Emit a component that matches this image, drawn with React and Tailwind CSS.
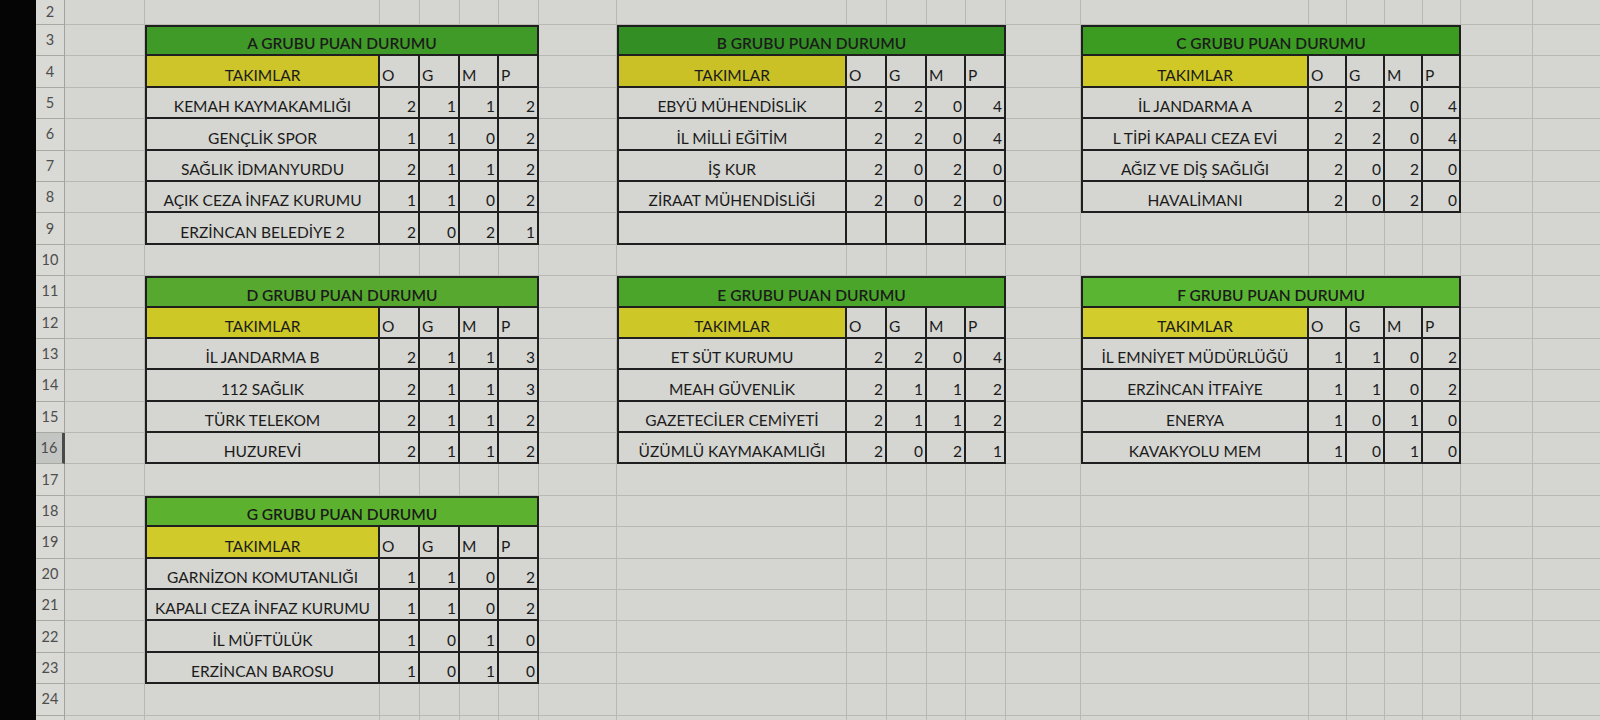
import React from 'react';

// sheet columns: black edge, row header, A, [B-F], G, [H-L], M, [N-R], S, T
const COLS =
  'grid-cols-[36px_29px_80px_235px_40px_40px_39px_40px_78px_230px_40px_40px_39px_40px_75px_228px_38px_38px_38px_38px_72px_72px]';

const tables = {
  A: {
    title: 'A GRUBU PUAN DURUMU',
    green: 'bg-[#3f9a28]',
    yellow: 'bg-[#cdc52a]',
    teams: [
      ['KEMAH KAYMAKAMLIĞI', 2, 1, 1, 2],
      ['GENÇLİK SPOR', 1, 1, 0, 2],
      ['SAĞLIK İDMANYURDU', 2, 1, 1, 2],
      ['AÇIK CEZA İNFAZ KURUMU', 1, 1, 0, 2],
      ['ERZİNCAN BELEDİYE 2', 2, 0, 2, 1],
    ],
  },
  B: {
    title: 'B GRUBU PUAN DURUMU',
    green: 'bg-[#338f24]',
    yellow: 'bg-[#c9c126]',
    teams: [
      ['EBYÜ MÜHENDİSLİK', 2, 2, 0, 4],
      ['İL MİLLİ EĞİTİM', 2, 2, 0, 4],
      ['İŞ KUR', 2, 0, 2, 0],
      ['ZİRAAT MÜHENDİSLİĞİ', 2, 0, 2, 0],
      ['', '', '', '', ''],
    ],
  },
  C: {
    title: 'C GRUBU PUAN DURUMU',
    green: 'bg-[#3c9c22]',
    yellow: 'bg-[#cfc826]',
    teams: [
      ['İL JANDARMA A', 2, 2, 0, 4],
      ['L TİPİ KAPALI CEZA EVİ', 2, 2, 0, 4],
      ['AĞIZ VE DİŞ SAĞLIĞI', 2, 0, 2, 0],
      ['HAVALİMANI', 2, 0, 2, 0],
    ],
  },
  D: {
    title: 'D GRUBU PUAN DURUMU',
    green: 'bg-[#56a92e]',
    yellow: 'bg-[#cdc826]',
    teams: [
      ['İL JANDARMA B', 2, 1, 1, 3],
      ['112 SAĞLIK', 2, 1, 1, 3],
      ['TÜRK TELEKOM', 2, 1, 1, 2],
      ['HUZUREVİ', 2, 1, 1, 2],
    ],
  },
  E: {
    title: 'E GRUBU PUAN DURUMU',
    green: 'bg-[#4aa52a]',
    yellow: 'bg-[#cec728]',
    teams: [
      ['ET SÜT KURUMU', 2, 2, 0, 4],
      ['MEAH GÜVENLİK', 2, 1, 1, 2],
      ['GAZETECİLER CEMİYETİ', 2, 1, 1, 2],
      ['ÜZÜMLÜ KAYMAKAMLIĞI', 2, 0, 2, 1],
    ],
  },
  F: {
    title: 'F GRUBU PUAN DURUMU',
    green: 'bg-[#5ab632]',
    yellow: 'bg-[#d2cc2c]',
    teams: [
      ['İL EMNİYET MÜDÜRLÜĞÜ', 1, 1, 0, 2],
      ['ERZİNCAN İTFAİYE', 1, 1, 0, 2],
      ['ENERYA', 1, 0, 1, 0],
      ['KAVAKYOLU MEM', 1, 0, 1, 0],
    ],
  },
  G: {
    title: 'G GRUBU PUAN DURUMU',
    green: 'bg-[#5cb22e]',
    yellow: 'bg-[#d0ca2a]',
    teams: [
      ['GARNİZON KOMUTANLIĞI', 1, 1, 0, 2],
      ['KAPALI CEZA İNFAZ KURUMU', 1, 1, 0, 2],
      ['İL MÜFTÜLÜK', 1, 0, 1, 0],
      ['ERZİNCAN BAROSU', 1, 0, 1, 0],
    ],
  },
};

// which table starts on which row, per block (left / middle / right)
const placements = [
  [
    { key: 'A', start: 3 },
    { key: 'D', start: 11 },
    { key: 'G', start: 18 },
  ],
  [
    { key: 'B', start: 3 },
    { key: 'E', start: 11 },
  ],
  [
    { key: 'C', start: 3 },
    { key: 'F', start: 11 },
  ],
];

const rows = Array.from({ length: 24 }, (_, i) => i + 2);

const empty = 'border-r border-b border-[#b9b9b4]';
const dark = 'border-r-2 border-b-2 border-[#1f1f1f]';

const EmptyCells = ({ n }) =>
  Array.from({ length: n }, (_, i) => <div key={i} className={empty} />);

const Block = ({ blockIndex, row }) => {
  const hit = placements[blockIndex].find(
    (p) => row >= p.start && row < p.start + 2 + tables[p.key].teams.length
  );
  if (!hit) return <EmptyCells n={5} />;

  const t = tables[hit.key];
  const offset = row - hit.start;

  if (offset === 0) {
    return (
      <div
        className={`col-span-5 flex items-end justify-center pb-[2px] border-2 border-[#1f1f1f] ${t.green} font-semibold`}
      >
        {t.title}
      </div>
    );
  }

  if (offset === 1) {
    return (
      <>
        <div className={`flex items-end justify-center pb-[2px] border-l-2 ${dark} ${t.yellow}`}>
          TAKIMLAR
        </div>
        {['O', 'G', 'M', 'P'].map((h) => (
          <div key={h} className={`flex items-end pl-[2px] pb-[2px] ${dark}`}>
            {h}
          </div>
        ))}
      </>
    );
  }

  const [name, ...nums] = t.teams[offset - 2];
  return (
    <>
      <div className={`flex items-end justify-center pb-[2px] border-l-2 ${dark}`}>{name}</div>
      {nums.map((n, i) => (
        <div key={i} className={`flex items-end justify-end pr-[2px] pb-[2px] ${dark}`}>
          {n}
        </div>
      ))}
    </>
  );
};

export default function App() {
  return (
    <div className="w-[1600px] h-[720px] overflow-hidden bg-[#d5d5d1] text-[#1b1b1b] font-['Lato','Liberation_Sans',sans-serif] text-[15.5px] leading-[18px]">
      {rows.map((r) => (
        <div key={r} className={`grid ${COLS} ${r === 2 ? 'h-[25px]' : 'h-[31.4px]'}`}>
          <div className="bg-[#050505]" />
          <div
            className={`flex items-center justify-center text-[14.5px] text-[#4d4d4d] border-b border-[#a9a9a4] ${
              r === 16
                ? 'bg-[#c3c5c3] border-r-[3px] border-r-[#4a4a4a]'
                : 'bg-[#d9d9d5] border-r border-r-[#a2a29d]'
            }`}
          >
            {r}
          </div>
          <div className={empty} />
          <Block blockIndex={0} row={r} />
          <div className={empty} />
          <Block blockIndex={1} row={r} />
          <div className={empty} />
          <Block blockIndex={2} row={r} />
          <div className={empty} />
          <div className={empty} />
        </div>
      ))}
    </div>
  );
}
